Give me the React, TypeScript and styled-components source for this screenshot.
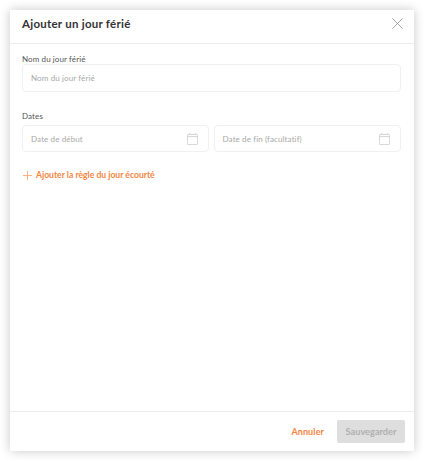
import React from "react";
import styled, { createGlobalStyle } from "styled-components";

const GlobalStyle = createGlobalStyle`
  html, body {
    margin: 0;
    padding: 0;
    width: 100%;
    height: 100%;
    background: #ffffff;
    font-family: "Lato", "Open Sans", sans-serif;
  }
  * {
    box-sizing: border-box;
  }
`;

const CalendarIcon = () => (
  <svg width="11" height="12" viewBox="0 0 11 12" fill="none" stroke="#c9c9c9" strokeWidth="0.8">
    <rect x="0.4" y="1.4" width="10.2" height="10.2" rx="0.8" />
    <path d="M0.4 3.6H10.6M2.8 0.3V1.4M8.2 0.3V1.4" />
  </svg>
);

const DateField = ({ placeholder }: { placeholder: string }) => (
  <DateBox>
    <Placeholder>{placeholder}</Placeholder>
    <CalendarIcon />
  </DateBox>
);

export default function App() {
  return (
    <Page>
      <GlobalStyle />
      <Modal>
        <Header>
          <Title>Ajouter un jour férié</Title>
          <CloseButton aria-label="Fermer">
            <svg width="11" height="11" viewBox="0 0 11 11" stroke="#8e8e8e" strokeWidth="0.8" fill="none">
              <path d="M0.4 0.4L10.6 10.6M10.6 0.4L0.4 10.6" />
            </svg>
          </CloseButton>
        </Header>
        <Body>
          <Section>
            <Label>Nom du jour férié</Label>
            <TextBox>
              <Placeholder>Nom du jour férié</Placeholder>
            </TextBox>
          </Section>
          <DatesSection>
            <Label>Dates</Label>
            <DatesRow>
              <DateField placeholder="Date de début" />
              <DateField placeholder="Date de fin (facultatif)" />
            </DatesRow>
          </DatesSection>
          <AddRule>
            <svg width="9" height="9" viewBox="0 0 9 9" stroke="#fbb184" strokeWidth="1" fill="none">
              <path d="M4.5 0V9M0 4.5H9" />
            </svg>
            Ajouter la règle du jour écourté
          </AddRule>
        </Body>
        <Footer>
          <CancelButton>Annuler</CancelButton>
          <SaveButton disabled>Sauvegarder</SaveButton>
        </Footer>
      </Modal>
    </Page>
  );
}

const Page = styled.div`
  width: 424px;
  height: 461px;
  padding: 10px;
  overflow: hidden;
`;

const Modal = styled.div`
  width: 404px;
  height: 441px;
  display: flex;
  flex-direction: column;
  background: #ffffff;
  box-shadow: 0 0 10px rgba(0, 0, 0, 0.22);
`;

const Header = styled.div`
  height: 34px;
  flex: none;
  display: flex;
  align-items: center;
  justify-content: space-between;
  padding: 0 11px 6px 12px;
  border-bottom: 1px solid #ececec;
`;

const Title = styled.h2`
  margin: 0;
  font-size: 11.5px;
  font-weight: 700;
  letter-spacing: 0.25px;
  color: #333333;
`;

const CloseButton = styled.button`
  display: flex;
  padding: 0;
  border: none;
  background: none;
`;

const Body = styled.div`
  flex: 1;
  display: flex;
  flex-direction: column;
  padding: 10px 13.5px 0 12px;
`;

const Section = styled.div`
  display: flex;
  flex-direction: column;
`;

const DatesSection = styled(Section)`
  margin-top: 19px;
  gap: 4px;
`;

const Label = styled.div`
  font-size: 8px;
  line-height: 10px;
  letter-spacing: 0.1px;
  color: #555555;
`;

const TextBox = styled.div`
  height: 28px;
  display: flex;
  align-items: center;
  padding: 0 10px 0 8px;
  border: 1px solid #f0f0f0;
  border-radius: 4px;
`;

const DatesRow = styled.div`
  display: grid;
  grid-template-columns: 1fr 1fr;
  gap: 4.5px;
`;

const DateBox = styled(TextBox)`
  height: 27px;
  justify-content: space-between;
`;

const Placeholder = styled.span`
  font-size: 8px;
  letter-spacing: 0.12px;
  color: #a8a8a8;
`;

const AddRule = styled.button`
  display: flex;
  align-items: center;
  gap: 4px;
  margin-top: 18px;
  padding: 0 0 0 1px;
  border: none;
  background: none;
  font: inherit;
  font-size: 8.6px;
  font-weight: 700;
  color: #f5853f;
`;

const Footer = styled.div`
  height: 40px;
  flex: none;
  display: flex;
  align-items: center;
  justify-content: flex-end;
  gap: 13px;
  padding: 0 9px;
  border-top: 1px solid #ececec;
`;

const CancelButton = styled.button`
  padding: 0;
  border: none;
  background: none;
  font: inherit;
  font-size: 9px;
  letter-spacing: 0.1px;
  font-weight: 700;
  color: #f5853f;
`;

const SaveButton = styled.button`
  width: 68px;
  height: 23px;
  padding: 0;
  border: none;
  border-radius: 2px;
  background: #dedede;
  font: inherit;
  font-size: 9.2px;
  font-weight: 700;
  color: #b0b0b0;
`;
